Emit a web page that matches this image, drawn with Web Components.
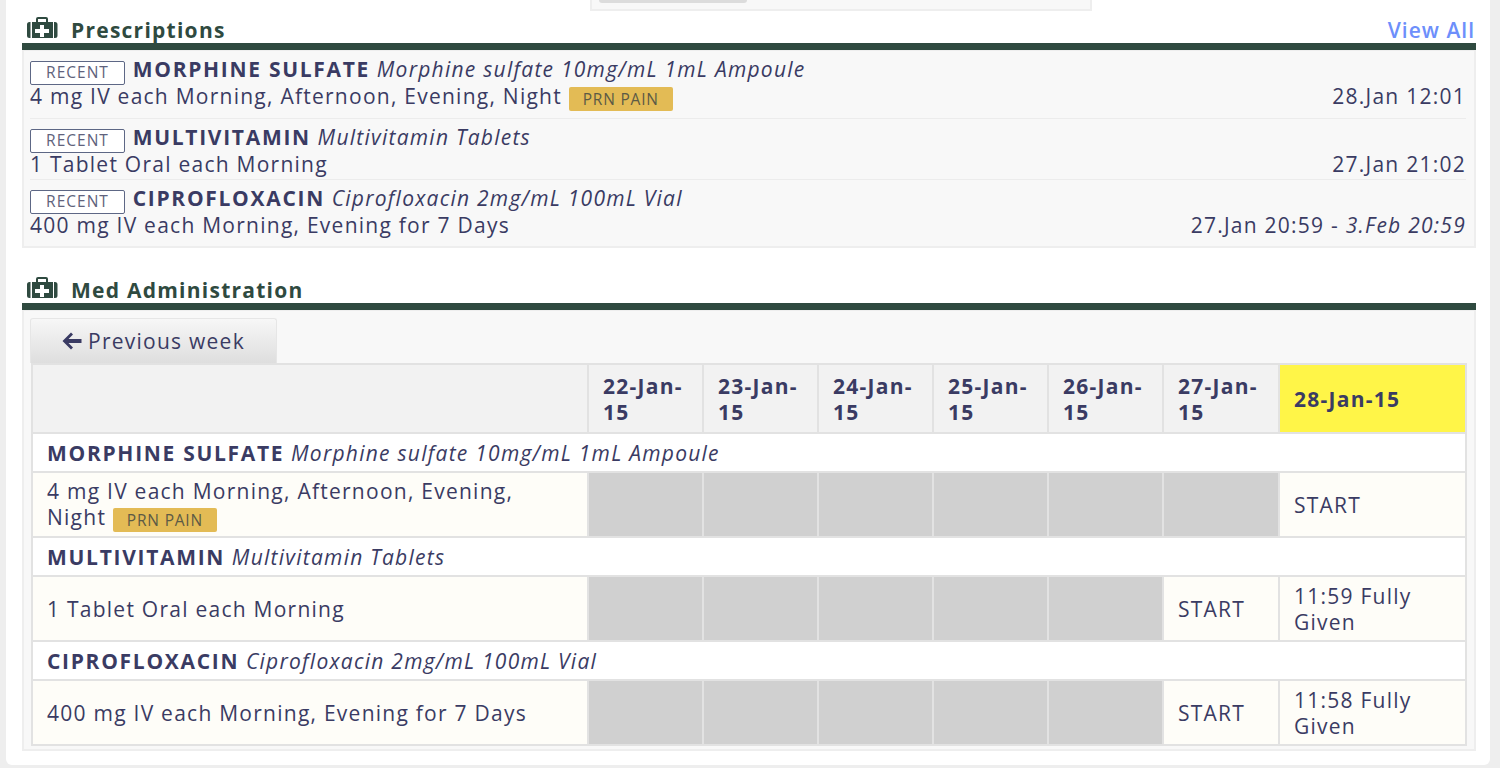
<!DOCTYPE html>
<html lang="en">
<head>
<meta charset="utf-8">
<title>Prescriptions</title>
<style>
  html, body { margin: 0; height: 768px; overflow: hidden; background: #eeeeee; }
  body { font: 21px/26px "Open Sans", "Liberation Sans", sans-serif; letter-spacing: 1.25px; color: #3a3b63; }
</style>
</head>
<body>
<patient-card>
  <med-section title="Prescriptions" action="View All" style="--panel-h: 198px; --panel-pad: 0">
    <rx-item name="MORPHINE SULFATE" form="Morphine sulfate 10mg/mL 1mL Ampoule" style="--item-h: 68px"
             dose="4 mg IV each Morning, Afternoon, Evening, Night" tag="PRN PAIN" when="28.Jan 12:01"></rx-item>
    <rx-item name="MULTIVITAMIN" form="Multivitamin Tablets"
             dose="1 Tablet Oral each Morning" when="27.Jan 21:02"></rx-item>
    <rx-item name="CIPROFLOXACIN" form="Ciprofloxacin 2mg/mL 100mL Vial"
             dose="400 mg IV each Morning, Evening for 7 Days" when="27.Jan 20:59 - " until="3.Feb 20:59" last></rx-item>
  </med-section>
  <med-section title="Med Administration" style="--section-gap: 28px; --panel-h: 441px; --panel-pad: 7px">
    <week-button>Previous week</week-button>
    <admin-table></admin-table>
  </med-section>
</patient-card>

<script>
// Medkit glyph shared by both section headings.
class MedIcon extends HTMLElement {
  constructor() {
    super();
    this.attachShadow({ mode: 'open' }).innerHTML = `
      <style>:host { display: block; width: 32px; height: 22px; margin-top: -3px; color: #2f4a40; }</style>
      <svg width="32" height="22" viewBox="0 0 32 22" fill="currentColor" style="display:block">
        <path d="M4.500 5v16H3.500Q1 21 1 18.500V7.500Q1 5 3.500 5zM28 5v16h1Q31.500 21 31.500 18.500V7.500Q31.500 5 29 5z"/>
        <path fill-rule="evenodd" d="M6 5h4V2q0-2 2-2h8q2 0 2 2v3h5v16H6zM12 5h8V2h-8zM14 8v4h-5v4h5v4h4v-4h5v-4h-5V8z"/>
      </svg>`;
  }
}

class PatientCard extends HTMLElement {
  constructor() {
    super();
    this.attachShadow({ mode: 'open' }).innerHTML = `
      <style>
        :host { display: block; box-sizing: border-box; margin-left: 6px; width: 1484px; height: 765px;
                padding: 0 14px 0 16px; background: #fff; border-radius: 0 0 6px 6px; }
        .stub { box-sizing: border-box; width: 502px; height: 11px; margin-left: 568px; padding-left: 7px;
                background: #f8f8f8; border: solid #eee; border-width: 0 2px 2px; }
        .stub i { display: block; width: 148px; height: 3px; background: #dcdcdc; border-radius: 0 0 3px 3px; }
      </style>
      <div class="stub"><i></i></div>
      <slot></slot>`;
  }
}

class MedSection extends HTMLElement {
  constructor() {
    super();
    this.attachShadow({ mode: 'open' }).innerHTML = `
      <style>
        :host { display: block; margin-top: var(--section-gap, 5px); }
        header { display: flex; align-items: center; gap: 13px; height: 27px; padding: 0 1px 0 4px;
                 border-bottom: 7px solid #2f4a40; color: #2f4a40; font-weight: 700; }
        h2 { margin: 0; font: inherit; flex: 1; }
        a { color: #6d8ffb; font-weight: 600; letter-spacing: 1px; text-decoration: none; }
        .panel { box-sizing: border-box; height: var(--panel-h); padding: var(--panel-pad) 8px 0 6px; background: #f8f8f8;
                 border: 2px solid #eee; border-top-width: 1px; }
      </style>
      <header><med-icon></med-icon><h2></h2><a href="#"></a></header>
      <div class="panel"><slot></slot></div>`;
    this.shadowRoot.querySelector('h2').textContent = this.getAttribute('title');
    this.shadowRoot.querySelector('a').textContent = this.getAttribute('action') || '';
    this.removeAttribute('title');
  }
}

class PrnTag extends HTMLElement {
  constructor() {
    super();
    this.attachShadow({ mode: 'open' }).innerHTML = `
      <style>
        :host { display: inline-block; box-sizing: border-box; height: 24px; padding: 0 14px;
                background: #e3bb55; border-radius: 2px; color: #5c5a45; font-size: 15.500px; letter-spacing: .8px;
                line-height: 25px; vertical-align: -1px; }
      </style><slot></slot>`;
  }
}

class RxItem extends HTMLElement {
  constructor() {
    super();
    const a = (n) => this.getAttribute(n) || '';
    this.attachShadow({ mode: 'open' }).innerHTML = `
      <style>
        :host { display: block; height: var(--item-h, 61px); box-sizing: border-box; padding-top: 5px; border-bottom: 1px solid #ececec; }
        :host([last]) { border-bottom: 0; }
        .top { height: 27px; white-space: nowrap; }
        .recent { display: inline-block; box-sizing: border-box; width: 95px; height: 24px; margin-right: 1px;
                  background: #fff; border: 1.500px solid #5d6785; border-radius: 2px; color: #60627c;
                  font-size: 15.500px; letter-spacing: 1px; line-height: 21px; text-align: center; vertical-align: -1px; }
        b { font-weight: 700; letter-spacing: 1.7px; }
        .bottom { display: flex; justify-content: space-between; white-space: nowrap; }
      </style>
      <div class="top"><span class="recent">RECENT</span> <b>${a('name')}</b> <i>${a('form')}</i></div>
      <div class="bottom">
        <span>${a('dose')} ${a('tag') ? `<prn-tag>${a('tag')}</prn-tag>` : ''}</span>
        <span>${a('when')}${a('until') ? `<i>${a('until')}</i>` : ''}</span>
      </div>`;
  }
}

class WeekButton extends HTMLElement {
  constructor() {
    super();
    this.attachShadow({ mode: 'open' }).innerHTML = `
      <style>
        :host { display: flex; align-items: center; justify-content: center; gap: 6px; box-sizing: border-box;
                width: 247px; height: 45px; background: linear-gradient(#f7f7f7, #dedede);
                border: 1px solid #e6e6e6; border-bottom: 0; border-radius: 3px 3px 0 0; }
      </style>
      <svg width="20" height="18" viewBox="0 0 20 18" fill="currentColor">
        <path d="M9 .5 11 2.500 6.500 7H19.500V11H6.500L11 15.500 9 17.500 .5 9z"/>
      </svg>
      <slot></slot>`;
  }
}

const DAYS = ['22-Jan-15', '23-Jan-15', '24-Jan-15', '25-Jan-15', '26-Jan-15', '27-Jan-15'];
const TODAY = '28-Jan-15';
const MEDS = [
  { name: 'MORPHINE SULFATE', form: 'Morphine sulfate 10mg/mL 1mL Ampoule',
    dose: '4 mg IV each Morning, Afternoon, Evening, Night <prn-tag>PRN PAIN</prn-tag>',
    cells: ['', '', '', '', '', '', 'START'] },
  { name: 'MULTIVITAMIN', form: 'Multivitamin Tablets', dose: '1 Tablet Oral each Morning',
    cells: ['', '', '', '', '', 'START', '11:59 Fully Given'] },
  { name: 'CIPROFLOXACIN', form: 'Ciprofloxacin 2mg/mL 100mL Vial', dose: '400 mg IV each Morning, Evening for 7 Days',
    cells: ['', '', '', '', '', 'START', '11:58 Fully Given'] },
];

class AdminTable extends HTMLElement {
  constructor() {
    super();
    const rows = MEDS.map((m) => `
      <tr class="name"><td colspan="8"><b>${m.name}</b> <i>${m.form}</i></td></tr>
      <tr class="dose"><td>${m.dose}</td>${m.cells.map((c) => c ? `<td>${c}</td>` : '<td class="none"></td>').join('')}</tr>`).join('');
    this.attachShadow({ mode: 'open' }).innerHTML = `
      <style>
        :host { display: block; margin-left: 1px; }
        table { table-layout: fixed; width: 1434px; border-collapse: collapse; }
        th, td { padding: 0 14px; border: 2px solid #e2e2e2; text-align: left; font-weight: 400; }
        th { background: #f2f2f2; font-weight: 700; }
        th.today { background: #fff548; }
        .head { height: 69px; }
        .name { height: 39px; } .name td { background: #fff; }
        .name b { letter-spacing: 1.7px; }
        .dose { height: 65px; } .dose td { background: #fefdf8; }
        .dose td.none { background: #d0d0d0; }
      </style>
      <table>
        <colgroup><col style="width:556px">
          <col style="width:115px"><col style="width:115px"><col style="width:115px"><col style="width:115px">
          <col style="width:115px"><col style="width:116px"><col style="width:187px"></colgroup>
        <tr class="head"><th></th>${DAYS.map((d) => `<th>${d}</th>`).join('')}<th class="today">${TODAY}</th></tr>
        ${rows}
      </table>`;
  }
}

customElements.define('med-icon', MedIcon);
customElements.define('patient-card', PatientCard);
customElements.define('med-section', MedSection);
customElements.define('prn-tag', PrnTag);
customElements.define('rx-item', RxItem);
customElements.define('week-button', WeekButton);
customElements.define('admin-table', AdminTable);
</script>
</body>
</html>
